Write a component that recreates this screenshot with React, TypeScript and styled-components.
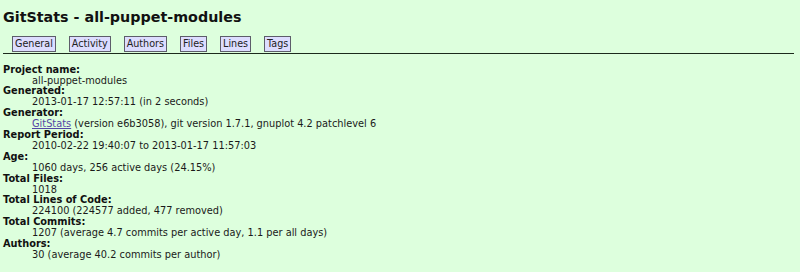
import styled, { createGlobalStyle } from "styled-components";

const GlobalStyle = createGlobalStyle`
  html, body {
    margin: 0;
    padding: 0;
    background-color: #dfd;
    color: #000;
    font-family: "DejaVu Sans", Verdana, sans-serif;
  }
`;

const Page = styled.div`
  padding: 9px 6px 0 3px;
`;

const Title = styled.h1`
  margin: 0;
  font-size: 14.3px;
  font-weight: bold;
  line-height: 16.6px;
  color: #111;
`;

const Nav = styled.ul`
  display: flex;
  align-items: flex-end;
  gap: 13px;
  list-style: none;
  margin: 9px 0 0;
  padding: 0 0 1px 9px;
  height: 17px;
  border-bottom: 1px solid #1c2a1c;
`;

const Tab = styled.li`
  display: block;
  height: 14px;
  padding: 0 2px;
  background-color: #ddf;
  border: 1px solid #5d5d6a;
  font-size: 9.6px;
  line-height: 14px;
  color: #222;
  white-space: nowrap;
`;

const Stats = styled.dl`
  margin: 11px 0 0;
  font-size: 9.8px;
  line-height: 10.9px;
`;

const Term = styled.dt`
  font-weight: bold;
  color: #111;
  &::after {
    content: ":";
  }
`;

const Value = styled.dd`
  margin: 0 0 0 29px;
  color: #1a1a1a;
`;

const Link = styled.a`
  color: #5546a6;
  text-decoration: underline;
`;

const tabs = ["General", "Activity", "Authors", "Files", "Lines", "Tags"];

const stats: { label: string; value: React.ReactNode }[] = [
  { label: "Project name", value: "all-puppet-modules" },
  { label: "Generated", value: "2013-01-17 12:57:11 (in 2 seconds)" },
  {
    label: "Generator",
    value: (
      <>
        <Link href="#">GitStats</Link> (version e6b3058), git version 1.7.1,
        gnuplot 4.2 patchlevel 6
      </>
    ),
  },
  { label: "Report Period", value: "2010-02-22 19:40:07 to 2013-01-17 11:57:03" },
  { label: "Age", value: "1060 days, 256 active days (24.15%)" },
  { label: "Total Files", value: "1018" },
  { label: "Total Lines of Code", value: "224100 (224577 added, 477 removed)" },
  {
    label: "Total Commits",
    value: "1207 (average 4.7 commits per active day, 1.1 per all days)",
  },
  { label: "Authors", value: "30 (average 40.2 commits per author)" },
];

const App = () => {
  return (
    <Page>
      <GlobalStyle />
      <Title>GitStats - all-puppet-modules</Title>
      <Nav>
        {tabs.map((tab) => (
          <Tab key={tab}>{tab}</Tab>
        ))}
      </Nav>
      <Stats>
        {stats.map((item) => (
          <div key={item.label}>
            <Term>{item.label}</Term>
            <Value>{item.value}</Value>
          </div>
        ))}
      </Stats>
    </Page>
  );
};

export default App;
